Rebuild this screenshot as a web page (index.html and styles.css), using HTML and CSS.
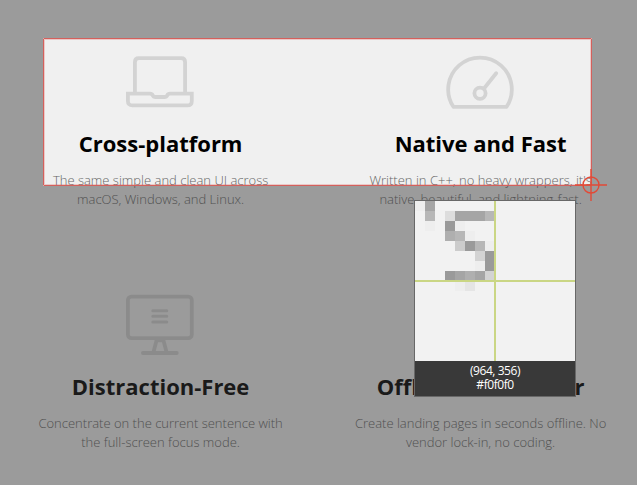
FILE: index.html
```html
<!DOCTYPE html>
<html lang="en">
<head>
<meta charset="utf-8">
<title>Features</title>
<link rel="stylesheet" href="styles.css">
</head>
<body>
<main class="features">
  <section class="feature">
    <svg class="icon" viewBox="0 0 72 72"><path d="M10.900 46V16.200q0-4 4-4H57.100q4 0 4 4V46"/><path class="sharp" d="M3.900 47.600H26q2 0 2.700 1.700t3 1.700h8.600q2.300 0 3-1.700t2.700-1.700H67.800v7.300q0 4.500-4.500 4.500H8.400q-4.500 0-4.500-4.500z"/></svg>
    <h2>Cross-platform</h2>
    <p>The same simple and clean UI across<br>macOS, Windows, and Linux.</p>
  </section>
  <section class="feature">
    <svg class="icon" viewBox="0 0 72 72"><path d="M9.400 60.800A31.800 31.800 0 1 1 62.600 60.800Z"/><circle cx="36" cy="47.300" r="5.600"/><path d="M40 42.500L52.200 27.300"/></svg>
    <h2>Native and Fast</h2>
    <p>Written in C++, no heavy wrappers, it's<br>native, beautiful, and lightning-fast.</p>
  </section>
  <section class="feature">
    <svg class="icon" viewBox="0 0 72 72"><rect x="3.900" y="7.600" width="63.900" height="41.500" rx="3.500"/><path d="M32.500 51.500L29.500 63M39.500 51.500L42.500 63M33 51.300H39M18.900 64H52.800"/><path class="thin" d="M28.800 21.700H42.800M28.800 27.300H42.800M28.800 33H42.800"/></svg>
    <h2>Distraction-Free</h2>
    <p>Concentrate on the current sentence with<br>the full-screen focus mode.</p>
  </section>
  <section class="feature">
    <svg class="icon" viewBox="0 0 72 72"></svg>
    <h2>Offline Site Builder</h2>
    <p>Create landing pages in seconds offline. No<br>vendor lock-in, no coding.</p>
  </section>
</main>
<div class="shade"></div>
<div class="selection"></div>
<svg class="cursor" viewBox="0 0 32 32"><circle cx="16" cy="16" r="8"/><path d="M0 16H32M16 0V32"/></svg>
<div class="magnifier">
  <svg class="pixels" viewBox="0 0 16 16" shape-rendering="crispEdges">
    <path fill="#eeeeee" d="M0 0h1v1h-1zM1 2h1v1h-1zM4 2h1v1h-1zM5 3h1v1h-1zM7 4h1v1h-1zM6 6h1v1h-1zM4 8h1v1h-1z"/>
    <path fill="#e5e5e5" d="M5 8h1v1h-1z"/>
    <path fill="#dddddd" d="M3 1h1v1h-1z"/>
    <path fill="#d3d3d3" d="M6 5h1v1h-1zM7 7h1v1h-1z"/>
    <path fill="#cccccc" d="M4 4h1v1h-1z"/>
    <path fill="#b7b7b7" d="M1 1h1v1h-1zM7 1h1v1h-1zM4 3h1v1h-1zM6 4h1v1h-1z"/>
    <path fill="#afafaf" d="M3 3h1v1h-1zM5 7h1v1h-1z"/>
    <path fill="#a5a5a5" d="M1 0h1v1h-1zM4 1h3v1h-3zM4 7h1v1h-1zM6 7h1v1h-1z"/>
    <path fill="#9a9a9a" d="M3 2h1v1h-1zM5 4h1v1h-1zM7 5h1v2h-1zM3 7h1v1h-1z"/>
    <path class="hair" d="M0 8H16M8 0V16"/>
  </svg>
  <div class="readout"><span>(964, 356)</span><span>#f0f0f0</span></div>
</div>
</body>
</html>
```
FILE: styles.css
```css
html {
  overflow: hidden;
}
body {
  position: relative;
  margin: 0;
  width: 637px;
  height: 485px;
  overflow: hidden;
  background: #f0f0f0;
  font-family: "Open Sans", sans-serif;
}
.features {
  display: grid;
  grid-template-columns: 320px 320px;
  grid-template-rows: 243px 196px;
  padding: 46px 0 0 0.6px;
}
.feature {
  display: flex;
  flex-direction: column;
  align-items: center;
  text-align: center;
}
.icon {
  width: 72px;
  height: 72px;
  margin-left: -1.2px;
  fill: none;
  stroke: #d3d3d3;
  stroke-width: 3.8;
  stroke-linecap: round;
  stroke-linejoin: round;
}
.sharp { stroke-linejoin: miter; }
.thin { stroke-width: 3; }
h2 {
  margin: 9px 0 0;
  font-size: 22px;
  line-height: 32px;
  font-weight: 700;
  color: #000;
  white-space: nowrap;
}
p {
  margin: 12px 0 0;
  font-size: 13px;
  line-height: 19px;
  font-weight: 300;
  color: #666;
  white-space: nowrap;
}
.shade,
.selection {
  position: absolute;
  left: 43px;
  top: 38px;
  width: 549px;
  height: 148px;
}
.shade {
  box-shadow: 0 0 0 600px rgba(56, 56, 56, 0.4625);
}
.selection {
  box-sizing: border-box;
  border: 1px solid #d4605c;
  border-radius: 1px;
  box-shadow: inset 0 0 0 1px rgba(220, 80, 75, 0.25);
}
.cursor {
  position: absolute;
  left: 575px;
  top: 169px;
  width: 32px;
  height: 32px;
  fill: none;
  stroke: #e24a37;
  stroke-width: 1.4;
}
.magnifier {
  position: absolute;
  left: 415px;
  top: 201px;
  width: 160px;
  height: 195px;
  background: #f2f2f2;
  box-shadow: 0 0 0 1px #686868;
}
.pixels {
  display: block;
  width: 160px;
  height: 160px;
}
.hair {
  fill: none;
  stroke: #cad684;
  stroke-width: 0.2;
}
.readout {
  display: flex;
  flex-direction: column;
  align-items: center;
  box-sizing: border-box;
  height: 35px;
  padding-top: 3px;
  background: #393939;
  color: #fff;
  font-size: 12px;
  letter-spacing: -0.45px;
  line-height: 14px;
}
```
